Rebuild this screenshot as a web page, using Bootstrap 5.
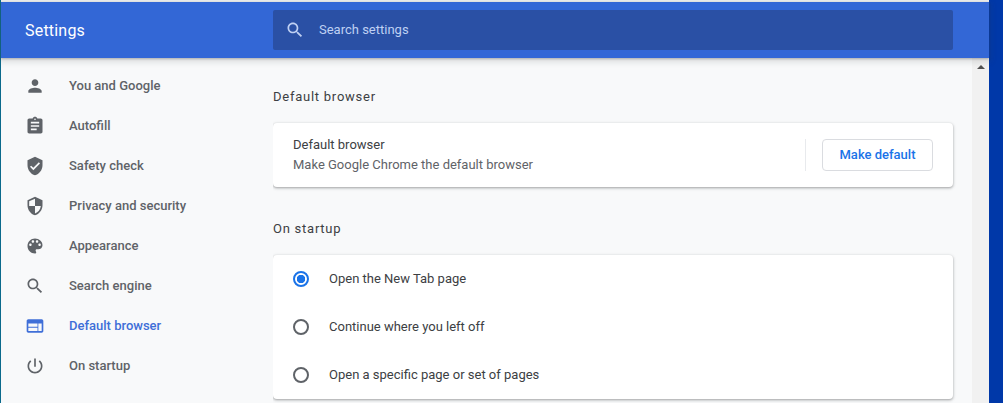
<!DOCTYPE html>
<html lang="en">
<head>
<meta charset="utf-8">
<title>Settings</title>
<link href="https://cdn.jsdelivr.net/npm/bootstrap@5.3.0/dist/css/bootstrap.min.css" rel="stylesheet">
<style>
html,body{height:403px;overflow:hidden;margin:0;background:#0038a8}
body{font-family:Roboto,"Liberation Sans",sans-serif;font-size:13px;color:#3c4043}
.desk-edge{width:1px;flex:none;background:#0b6a8c}
.chrome-win{width:988px;flex:none;height:403px;padding-top:2px;background:#f1f1f1}
.top-bar{height:56px;background:#3367d6;box-shadow:0 1px 2px rgba(60,64,67,.3),0 2px 6px 2px rgba(60,64,67,.15);position:relative;z-index:2}
.app-title{width:272px;padding:2px 0 0 24px;font-size:16px;color:#fff;letter-spacing:.2px;font-weight:400}
.search-box{width:680px;height:40px;background:#2a50a5;border-radius:2px;padding-left:12px;color:#bfd0f3;letter-spacing:0}
.search-box svg{fill:#bfd0f3;margin-right:14px}
.body-row{height:345px;background:#f8f9fa}
.side-nav{width:272px;flex:none;padding-top:8px}
.side-link{height:40px;padding-left:24px;color:#5f6368;font-weight:500;text-decoration:none;font-size:13px}
.side-link svg{width:20px;height:20px;fill:#5f6368;margin-right:24px;flex:none}
.side-link.current{color:#3f6fd8}
.side-link.current svg{fill:#3f6fd8}
.main-col{width:699px;flex:none;overflow:hidden}
.sect-title{height:68px;padding-top:32px;margin:0;font-size:13px;font-weight:400;line-height:20px;color:#3c4043;letter-spacing:.75px}
.sect-title.first{height:65px;padding-top:29px}
.panel-card{width:680px;border:0;border-radius:4px;background:#fff;box-shadow:0 1px 2px rgba(60,64,67,.3),0 1px 3px 1px rgba(60,64,67,.15)}
.db-row{height:64px;padding:0 20px}
.db-name{color:#3c4043;line-height:20px}
.db-sub{color:#5f6368;line-height:20px}
.v-rule{width:1px;height:32px;background:#e8eaed;margin-right:16px}
.make-btn{width:111px;height:32px;padding:0;font-size:13px;font-weight:500;color:#1a73e8;background:#fff;border:1px solid #dadce0;border-radius:4px}
.opt-row{height:48px;padding:0 20px;margin:0;min-height:0;border:0;background:transparent;color:#3c4043;display:flex;align-items:center}
.radio-mark{float:none!important;flex:none;margin:0 20px 0 0!important;width:16px;height:16px;border:2px solid #5f6368;background:#fff}
.radio-mark:checked{border-color:#1a73e8;background-color:#fff;background-image:radial-gradient(circle,#1a73e8 0,#1a73e8 4px,transparent 4.5px)}
.scroll-rail{width:17px;flex:none;background:#f1f1f1;padding-top:7px}
.scroll-arrow{width:0;height:0;margin:0 auto;border-left:4px solid transparent;border-right:4px solid transparent;border-bottom:4px solid #505050}
</style>
</head>
<body>
<div class="d-flex">
  <div class="desk-edge"></div>
  <div class="chrome-win d-flex flex-column">
    <header class="top-bar d-flex align-items-center">
      <div class="app-title">Settings</div>
      <div class="search-box d-flex align-items-center">
        <svg width="20" height="20" viewBox="0 0 24 24"><path d="M15.5 14h-.79l-.28-.27C15.41 12.59 16 11.11 16 9.5 16 5.91 13.09 3 9.5 3S3 5.91 3 9.5 5.91 16 9.5 16c1.61 0 3.09-.59 4.23-1.57l.27.28v.79l5 4.99L20.49 19l-4.99-5zm-6 0C7.01 14 5 11.99 5 9.5S7.01 5 9.5 5 14 7.01 14 9.5 11.99 14 9.5 14z"/></svg>
        <span>Search settings</span>
      </div>
    </header>
    <div class="body-row d-flex">
      <nav class="side-nav nav flex-column flex-nowrap">
        <a class="side-link d-flex align-items-center" href="#"><svg viewBox="0 0 24 24"><path d="M12 12c2.21 0 4-1.79 4-4s-1.79-4-4-4-4 1.79-4 4 1.79 4 4 4zm0 2c-2.67 0-8 1.34-8 4v2h16v-2c0-2.66-5.33-4-8-4z"/></svg>You and Google</a>
        <a class="side-link d-flex align-items-center" href="#"><svg viewBox="0 0 24 24"><path d="M19 3h-4.18C14.4 1.84 13.3 1 12 1c-1.3 0-2.4.84-2.82 2H5c-1.1 0-2 .9-2 2v14c0 1.1.9 2 2 2h14c1.1 0 2-.9 2-2V5c0-1.1-.9-2-2-2zm-7 0c.55 0 1 .45 1 1s-.45 1-1 1-1-.45-1-1 .45-1 1-1zm2 14H7v-2h7v2zm3-4H7v-2h10v2zm0-4H7V7h10v2z"/></svg>Autofill</a>
        <a class="side-link d-flex align-items-center" href="#"><svg viewBox="0 0 24 24"><path d="M12 1L3 5v6c0 5.55 3.84 10.74 9 12 5.16-1.26 9-6.45 9-12V5l-9-4zm-2 16l-4-4 1.41-1.41L10 14.17l6.59-6.59L18 9l-8 8z"/></svg>Safety check</a>
        <a class="side-link d-flex align-items-center" href="#"><svg viewBox="0 0 24 24"><path d="M12 1L3 5v6c0 5.55 3.84 10.74 9 12 5.16-1.26 9-6.45 9-12V5l-9-4zm0 10.99h7c-.53 4.12-3.28 7.79-7 8.94V12H5V6.3l7-3.11v8.8z"/></svg>Privacy and security</a>
        <a class="side-link d-flex align-items-center" href="#"><svg viewBox="0 0 24 24"><path d="M12 3c-4.97 0-9 4.03-9 9s4.03 9 9 9c.83 0 1.5-.67 1.5-1.5 0-.39-.15-.74-.39-1.01-.23-.26-.38-.61-.38-.99 0-.83.67-1.5 1.5-1.5H16c2.76 0 5-2.24 5-5 0-4.42-4.03-8-9-8zm-5.5 9c-.83 0-1.5-.67-1.5-1.5S5.67 9 6.5 9 8 9.67 8 10.5 7.33 12 6.5 12zm3-4C8.67 8 8 7.33 8 6.5S8.67 5 9.5 5s1.5.67 1.5 1.5S10.33 8 9.5 8zm5 0c-.83 0-1.5-.67-1.5-1.5S13.67 5 14.5 5s1.5.67 1.5 1.5S15.33 8 14.5 8zm3 4c-.83 0-1.5-.67-1.5-1.5S16.67 9 17.5 9s1.5.67 1.5 1.5-.67 1.5-1.5 1.5z"/></svg>Appearance</a>
        <a class="side-link d-flex align-items-center" href="#"><svg viewBox="0 0 24 24"><path d="M15.5 14h-.79l-.28-.27C15.41 12.59 16 11.11 16 9.5 16 5.91 13.09 3 9.5 3S3 5.91 3 9.5 5.91 16 9.5 16c1.61 0 3.09-.59 4.23-1.57l.27.28v.79l5 4.99L20.49 19l-4.99-5zm-6 0C7.01 14 5 11.99 5 9.5S7.01 5 9.5 5 14 7.01 14 9.5 11.99 14 9.5 14z"/></svg>Search engine</a>
        <a class="side-link current d-flex align-items-center" href="#"><svg viewBox="0 0 24 24"><path d="M20 4H4c-1.1 0-1.99.9-1.99 2L2 18c0 1.1.9 2 2 2h16c1.1 0 2-.9 2-2V6c0-1.1-.9-2-2-2zm-5 14H4v-4h11v4zm0-5H4V9h11v4zm5 5h-4V9h4v9z"/></svg>Default browser</a>
        <a class="side-link d-flex align-items-center" href="#"><svg viewBox="0 0 24 24"><path d="M13 3h-2v10h2V3zm4.83 2.17l-1.42 1.42C17.99 7.86 19 9.81 19 12c0 3.87-3.13 7-7 7s-7-3.13-7-7c0-2.19 1.01-4.14 2.58-5.42L6.17 5.17C4.23 6.82 3 9.26 3 12c0 4.97 4.03 9 9 9s9-4.03 9-9c0-2.74-1.23-5.18-3.17-6.83z"/></svg>On startup</a>
      </nav>
      <main class="main-col">
        <h2 class="sect-title first">Default browser</h2>
        <section class="card panel-card">
          <div class="db-row d-flex align-items-center">
            <div class="flex-grow-1">
              <div class="db-name">Default browser</div>
              <div class="db-sub">Make Google Chrome the default browser</div>
            </div>
            <div class="v-rule"></div>
            <button type="button" class="btn make-btn">Make default</button>
          </div>
        </section>
        <h2 class="sect-title">On startup</h2>
        <section class="card panel-card">
          <label class="form-check opt-row"><input class="form-check-input radio-mark" type="radio" name="startup" checked>Open the New Tab page</label>
          <label class="form-check opt-row"><input class="form-check-input radio-mark" type="radio" name="startup">Continue where you left off</label>
          <label class="form-check opt-row"><input class="form-check-input radio-mark" type="radio" name="startup">Open a specific page or set of pages</label>
        </section>
      </main>
      <div class="scroll-rail"><div class="scroll-arrow"></div></div>
    </div>
  </div>
</div>
<script src="https://cdn.jsdelivr.net/npm/bootstrap@5.3.0/dist/js/bootstrap.bundle.min.js"></script>
</body>
</html>
